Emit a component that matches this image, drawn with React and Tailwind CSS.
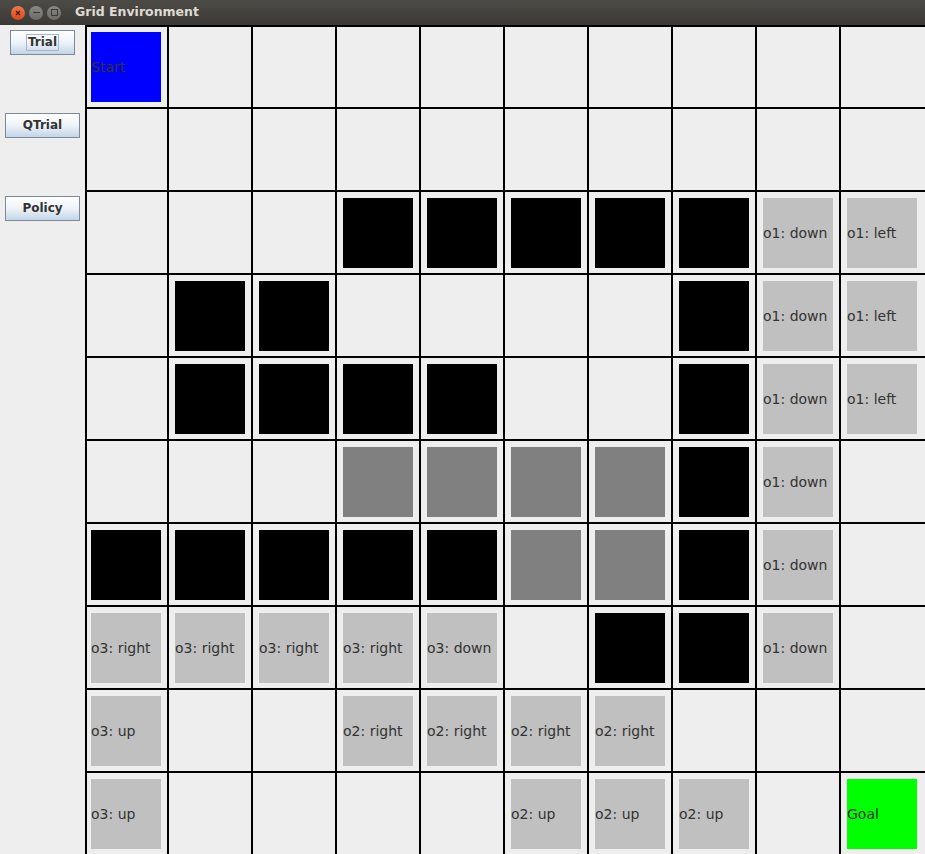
const B = { kind: "wall" };
const G = { kind: "gray" };
const E = null;
const L = (text) => ({ kind: "label", text });

const ROWS = [
  [{ kind: "start", text: "Start" }, E, E, E, E, E, E, E, E, E],
  [E, E, E, E, E, E, E, E, E, E],
  [E, E, E, B, B, B, B, B, L("o1: down"), L("o1: left")],
  [E, B, B, E, E, E, E, B, L("o1: down"), L("o1: left")],
  [E, B, B, B, B, E, E, B, L("o1: down"), L("o1: left")],
  [E, E, E, G, G, G, G, B, L("o1: down"), E],
  [B, B, B, B, B, G, G, B, L("o1: down"), E],
  [L("o3: right"), L("o3: right"), L("o3: right"), L("o3: right"), L("o3: down"), E, B, B, L("o1: down"), E],
  [L("o3: up"), E, E, L("o2: right"), L("o2: right"), L("o2: right"), L("o2: right"), E, E, E],
  [L("o3: up"), E, E, E, E, L("o2: up"), L("o2: up"), L("o2: up"), E, { kind: "goal", text: "Goal" }],
];

const squareColor = {
  wall: "bg-black",
  gray: "bg-[#808080]",
  label: "bg-[#c0c0c0]",
  start: "bg-[#0000ff]",
  goal: "bg-[#00ff00]",
};

function TitleBar() {
  return (
    <div className="h-[25px] flex items-center bg-gradient-to-b from-[#4c4b46] to-[#3a3935] shrink-0">
      <div className="flex items-center gap-[4px] pl-[11px]">
        <div className="w-[14px] h-[14px] rounded-full bg-gradient-to-b from-[#f0774a] to-[#d9461f] flex items-center justify-center">
          <svg width="8" height="8" viewBox="0 0 8 8">
            <path d="M2 2 L6 6 M6 2 L2 6" stroke="#4a1a0a" strokeWidth="1.3" />
          </svg>
        </div>
        <div className="w-[14px] h-[14px] rounded-full bg-gradient-to-b from-[#8a8984] to-[#6b6a66] flex items-center justify-center">
          <div className="w-[7px] h-[1.5px] bg-[#3a3935]" />
        </div>
        <div className="w-[14px] h-[14px] rounded-full bg-gradient-to-b from-[#8a8984] to-[#6b6a66] flex items-center justify-center">
          <div className="w-[7px] h-[7px] border border-[#3a3935]" />
        </div>
      </div>
      <span className="ml-[14px] text-[12.5px] font-bold text-[#dfdbd2] font-['DejaVu_Sans',sans-serif]">
        Grid Environment
      </span>
    </div>
  );
}

function SideButton({ label, wide, focused }) {
  return (
    <button
      className={`h-[25px] ${wide ? "w-[75px]" : "w-[65px]"} border border-[#7a8a99] bg-gradient-to-b from-[#ffffff] via-[#eef3f9] to-[#c3d5e7] flex items-center justify-center text-[12px] font-bold text-[#333333] font-['DejaVu_Sans',sans-serif]`}
    >
      <span className={focused ? "border border-[#a3b8cc] px-[1px] leading-[15px]" : "leading-[15px]"}>
        {label}
      </span>
    </button>
  );
}

export default function App() {
  return (
    <div className="w-[925px] h-[854px] overflow-hidden flex flex-col bg-[#eeeeee] font-['DejaVu_Sans',sans-serif]">
      <TitleBar />
      <div className="flex flex-1">
        <div className="w-[85px] flex flex-col items-center pt-[5px] gap-[58px]">
          <SideButton label="Trial" focused />
          <SideButton label="QTrial" wide />
          <SideButton label="Policy" wide />
        </div>
        <div className="grid grid-cols-[82px_repeat(8,84px)_86px] grid-rows-[82px_repeat(9,83px)]">
          {ROWS.map((row, r) =>
            row.map((cell, c) => (
              <div
                key={`${r}-${c}`}
                className={`border-l-2 border-t-2 border-black ${c === 0 ? "pl-[4px]" : "pl-[6px]"} ${r === 0 ? "pt-[5px]" : "pt-[6px]"}`}
              >
                {cell && (
                  <div className={`w-[70px] h-[70px] flex items-center ${squareColor[cell.kind]}`}>
                    {cell.text && (
                      <span className="text-[14px] text-[#333333] whitespace-nowrap leading-none">
                        {cell.text}
                      </span>
                    )}
                  </div>
                )}
              </div>
            ))
          )}
        </div>
      </div>
    </div>
  );
}
